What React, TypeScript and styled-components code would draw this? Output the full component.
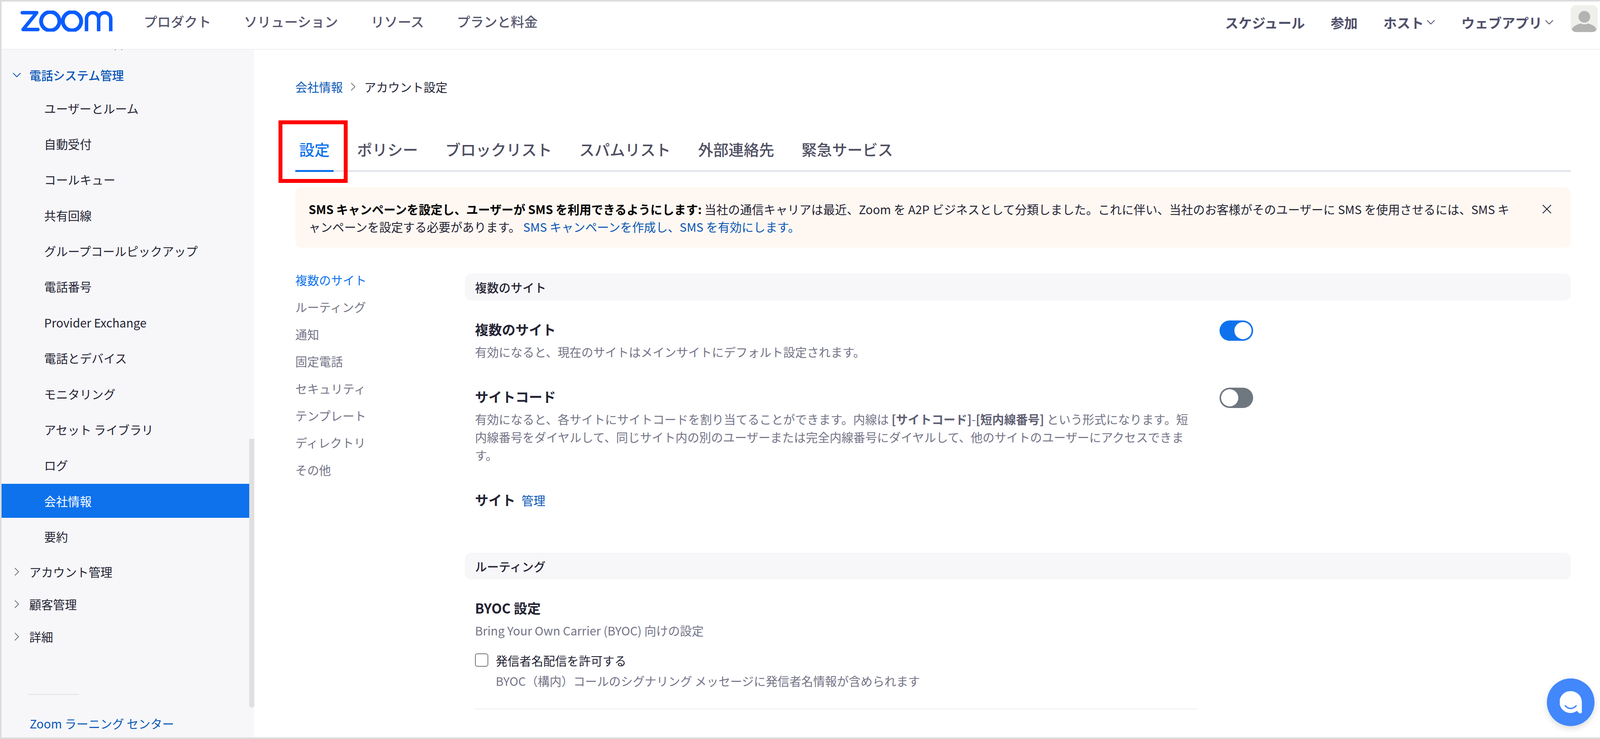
import styled, { createGlobalStyle } from "styled-components";
import { ChevronDown, ChevronRight, X } from "lucide-react";

const GlobalStyle = createGlobalStyle`
  html, body {
    margin: 0;
    padding: 0;
    background: #fff;
  }
  body {
    font-family: "Noto Sans CJK JP", "Noto Sans", sans-serif;
    color: #232333;
  }
  * {
    box-sizing: border-box;
  }
`;

const subItems = [
  "ユーザーとルーム",
  "自動受付",
  "コールキュー",
  "共有回線",
  "グループコールピックアップ",
  "電話番号",
  "Provider Exchange",
  "電話とデバイス",
  "モニタリング",
  "アセット ライブラリ",
  "ログ",
  "会社情報",
  "要約",
];

const tabs = ["設定", "ポリシー", "ブロックリスト", "スパムリスト", "外部連絡先", "緊急サービス"];
const sections = ["複数のサイト", "ルーティング", "通知", "固定電話", "セキュリティ", "テンプレート", "ディレクトリ", "その他"];

const ZoomLogo = () => (
  <svg width="240" height="54" viewBox="0 0 240 54" fill="none" stroke="#0b5cff">
    <path d="M7 5.5H44L9 48.5H47" strokeWidth="9" strokeLinejoin="round" strokeLinecap="round" />
    <circle cx="78.7" cy="27.3" r="23.5" strokeWidth="10" />
    <circle cx="134.3" cy="27.3" r="23.5" strokeWidth="10" />
    <path
      d="M171.5 53V21A15.5 15.5 0 0 1 202.5 21V53M202.5 21A15.5 15.5 0 0 1 233.5 21V53"
      strokeWidth="9"
    />
  </svg>
);

const AvatarIcon = () => (
  <svg width="69" height="69" viewBox="0 0 69 69" fill="#b3b3b3">
    <circle cx="35" cy="30" r="15" />
    <path d="M3 62C5 54 18 49 26 47C30 50 40 50 44 47C52 49 64 54 66 62C66 66 62 69 56 69H13C8 69 3 66 3 62Z" />
  </svg>
);

const ChatIcon = () => (
  <svg width="57" height="58" viewBox="0 0 57 58" fill="none">
    <path
      d="M28.5 .5A28 28 0 0 1 56.5 28.5V54Q56.5 58 52 57.5Q49 57 44 51A28 28 0 1 1 28.5 .5Z"
      fill="#fff"
    />
    <path d="M14 38Q28 52 42 38" stroke="#4287fb" strokeWidth="3.5" strokeLinecap="round" />
  </svg>
);

const App = () => {
  return (
    <Frame>
      <GlobalStyle />
      <Header>
        <LeftGroup>
          <ZoomLogo />
          <MainNav>
            <span>プロダクト</span>
            <span>ソリューション</span>
            <span>リソース</span>
            <span>プランと料金</span>
          </MainNav>
        </LeftGroup>
        <RightGroup>
          <RightNav>
            <span>スケジュール</span>
            <span>参加</span>
            <NavDrop>
              ホスト
              <ChevronDown size={36} strokeWidth={1.4} />
            </NavDrop>
            <NavDrop>
              ウェブアプリ
              <ChevronDown size={36} strokeWidth={1.4} />
            </NavDrop>
          </RightNav>
          <Avatar>
            <AvatarIcon />
          </Avatar>
        </RightGroup>
      </Header>

      <Body>
        <Sidebar>
          <PeekRow>ワークスペース管理</PeekRow>
          <TopRow $open>
            <ChevronDown size={36} strokeWidth={1.4} />
            電話システム管理
          </TopRow>
          <SubList>
            {subItems.map((item) => (
              <SubItem key={item} $active={item === "会社情報"}>
                {item}
              </SubItem>
            ))}
          </SubList>
          {["アカウント管理", "顧客管理", "詳細"].map((item) => (
            <TopRow key={item}>
              <ChevronRight size={36} strokeWidth={1.4} />
              {item}
            </TopRow>
          ))}
          <SideFooter>
            <FooterLine />
            <FooterLink>Zoom ラーニング センター</FooterLink>
          </SideFooter>
          <ScrollThumb />
        </Sidebar>

        <Main>
          <Breadcrumb>
            <a>会社情報</a>
            <ChevronRight size={36} strokeWidth={1.4} />
            <span>アカウント設定</span>
          </Breadcrumb>

          <TabBar>
            {tabs.map((tab, i) => (
              <Tab key={tab} $active={i === 0}>
                {tab}
                {i === 0 && <RedMark />}
              </Tab>
            ))}
          </TabBar>

          <Banner>
            <BannerText>
              <strong>SMS キャンペーンを設定し、ユーザーが SMS を利用できるようにします:</strong>{" "}
              当社の通信キャリアは最近、Zoom を A2P ビジネスとして分類しました。これに伴い、当社のお客様がそのユーザーに SMS を使用させるには、SMS キ
              <br />
              ャンペーンを設定する必要があります。 <a>SMS キャンペーンを作成し、SMS を有効にします。</a>
            </BannerText>
            <CloseBtn>
              <X size={40} strokeWidth={1.3} />
            </CloseBtn>
          </Banner>

          <Columns>
            <SectionNav>
              {sections.map((s, i) => (
                <SectionLink key={s} $active={i === 0}>
                  {s}
                </SectionLink>
              ))}
            </SectionNav>

            <Content>
              <SectionHead>複数のサイト</SectionHead>
              <SettingRow>
                <SettingText>
                  <SettingTitle>複数のサイト</SettingTitle>
                  <SettingDesc>有効になると、現在のサイトはメインサイトにデフォルト設定されます。</SettingDesc>
                </SettingText>
                <Toggle $on>
                  <Knob />
                </Toggle>
              </SettingRow>
              <SettingRow>
                <SettingText>
                  <SettingTitle>サイトコード</SettingTitle>
                  <SettingDesc>
                    有効になると、各サイトにサイトコードを割り当てることができます。内線は <b>[サイトコード]</b>-<b>[短内線番号]</b> という形式になります。短
                    <br />
                    内線番号をダイヤルして、同じサイト内の別のユーザーまたは完全内線番号にダイヤルして、他のサイトのユーザーにアクセスできま
                    <br />
                    す。
                  </SettingDesc>
                </SettingText>
                <Toggle>
                  <Knob />
                </Toggle>
              </SettingRow>
              <SettingRow>
                <SettingTitle>
                  サイト <ManageLink>管理</ManageLink>
                </SettingTitle>
              </SettingRow>

              <SectionHead $second>ルーティング</SectionHead>
              <SettingRow>
                <SettingText>
                  <SettingTitle>BYOC 設定</SettingTitle>
                  <SettingDesc>Bring Your Own Carrier (BYOC) 向けの設定</SettingDesc>
                  <CheckRow>
                    <CheckBox />
                    <div>
                      <CheckLabel>発信者名配信を許可する</CheckLabel>
                      <CheckDesc>BYOC（構内）コールのシグナリング メッセージに発信者名情報が含められます</CheckDesc>
                    </div>
                  </CheckRow>
                  <Divider />
                </SettingText>
              </SettingRow>
            </Content>
          </Columns>
        </Main>
      </Body>

      <ChatButton>
        <ChatIcon />
      </ChatButton>
    </Frame>
  );
};

export default App;

const Frame = styled.div`
  position: relative;
  width: 4116px;
  height: 1891px;
  border: 4px solid #dcdcdc;
  overflow: hidden;
  background: #fff;
  display: flex;
  flex-direction: column;
`;

const Header = styled.header`
  height: 123px;
  flex: none;
  display: flex;
  justify-content: space-between;
  align-items: flex-start;
  padding: 0 22px 0 46px;
  border-bottom: 2px solid #f0f0f3;
  background: #fff;
  position: relative;
  z-index: 2;
`;

const LeftGroup = styled.div`
  display: flex;
  align-items: center;
  margin-top: 23px;
  svg {
    display: block;
  }
`;

const MainNav = styled.nav`
  display: flex;
  gap: 84px;
  margin-left: 78px;
  font-size: 34.5px;
  line-height: 48px;
  color: #56566e;
  font-weight: 500;
`;

const RightGroup = styled.div`
  display: flex;
  align-items: flex-start;
`;

const RightNav = styled.nav`
  display: flex;
  gap: 66px;
  margin-top: 31px;
  font-size: 34.5px;
  line-height: 44px;
  font-weight: 700;
  color: #4f4f6a;
`;

const NavDrop = styled.span`
  display: flex;
  align-items: center;
  svg {
    margin: 0 -6px 0 0;
  }
`;

const Avatar = styled.div`
  width: 69px;
  height: 69px;
  margin: 9px 0 0 43px;
  border-radius: 14px;
  background: #f0f0ea;
  overflow: hidden;
  svg {
    display: block;
  }
`;

const Body = styled.div`
  flex: 1;
  display: flex;
  min-height: 0;
`;

const Sidebar = styled.aside`
  position: relative;
  width: 647px;
  flex: none;
  padding-right: 13px;
  display: flex;
  flex-direction: column;
  overflow: hidden;
  background: #f7f7fa;
  font-size: 30.4px;
  line-height: 44px;
`;

const PeekRow = styled.div`
  flex: none;
  height: 76px;
  margin-top: -53px;
  padding-left: 75px;
  display: flex;
  align-items: center;
`;

const TopRow = styled.div<{ $open?: boolean }>`
  flex: none;
  height: 83px;
  padding-left: 21px;
  display: flex;
  align-items: center;
  gap: 14px;
  color: ${(p) => (p.$open ? "#0956b5" : "#232333")};
  font-weight: ${(p) => (p.$open ? 500 : 400)};
  svg {
    color: ${(p) => (p.$open ? "#0956b5" : "#6e7680")};
  }
`;

const SubList = styled.div`
  display: flex;
  flex-direction: column;
  gap: 4.4px;
  margin-bottom: 5px;
`;

const SubItem = styled.div<{ $active?: boolean }>`
  height: 87px;
  padding-left: 109px;
  display: flex;
  align-items: center;
  color: ${(p) => (p.$active ? "#fff" : "#232333")};
  background: ${(p) => (p.$active ? "#0e72ed" : "transparent")};
`;

const SideFooter = styled.div`
  margin-top: auto;
  padding: 0 0 14px 68px;
`;

const FooterLine = styled.div`
  width: 130px;
  height: 2px;
  background: #dfe0e6;
`;

const FooterLink = styled.a`
  display: block;
  margin: 51px 0 0 4px;
  color: #0956b5;
`;

const ScrollThumb = styled.div`
  position: absolute;
  top: 996px;
  right: 0;
  width: 13px;
  height: 688px;
  border-radius: 0 0 7px 7px;
  background: #e0e0e0;
`;

const Main = styled.main`
  flex: 1;
  min-width: 0;
  padding: 73px 91px 0 105px;
  overflow: hidden;
  font-size: 30.4px;
  line-height: 44px;
`;

const Breadcrumb = styled.div`
  display: flex;
  align-items: center;
  color: #232333;
  a {
    color: #0956b5;
  }
  svg {
    margin: 0 11px 0 8px;
    color: #6e7680;
  }
`;

const TabBar = styled.div`
  display: flex;
  gap: 50px;
  margin-top: 106px;
  padding-top: 1px;
  border-bottom: 5px solid #e4e6ee;
`;

const Tab = styled.div<{ $active?: boolean }>`
  position: relative;
  padding: 0 10px 24px;
  margin-bottom: -5px;
  font-size: 39px;
  line-height: 60px;
  font-weight: 500;
  color: ${(p) => (p.$active ? "#0e72ed" : "#4f4f62")};
  border-bottom: 5px solid ${(p) => (p.$active ? "#0e72ed" : "transparent")};
`;

const RedMark = styled.span`
  position: absolute;
  left: -43px;
  top: -43px;
  width: 177px;
  height: 160px;
  border: 10px solid #ff0000;
`;

const Banner = styled.div`
  margin-top: 39px;
  height: 155px;
  padding: 34px 41px 0 34px;
  display: flex;
  justify-content: space-between;
  align-items: flex-start;
  border-radius: 16px;
  background: #fff8f2;
`;

const BannerText = styled.div`
  color: #232333;
  line-height: 45px;
  white-space: nowrap;
  strong {
    font-weight: 700;
    color: #000;
  }
  a {
    color: #0956b5;
  }
`;

const CloseBtn = styled.div`
  margin-top: 2px;
  height: 40px;
  color: #232333;
`;

const Columns = styled.div`
  display: flex;
  margin-top: 60px;
`;

const SectionNav = styled.nav`
  width: 434px;
  flex: none;
  display: flex;
  flex-direction: column;
  gap: 25.4px;
`;

const SectionLink = styled.a<{ $active?: boolean }>`
  color: ${(p) => (p.$active ? "#0e72ed" : "#747487")};
`;

const Content = styled.div`
  flex: 1;
  min-width: 0;
  padding-top: 6px;
`;

const SectionHead = styled.div<{ $second?: boolean }>`
  height: 69px;
  margin: ${(p) => (p.$second ? "109px 0 47px" : "0 0 48px")};
  padding: 0 26px;
  display: flex;
  align-items: center;
  border-radius: 16px;
  background: #f7f7f9;
  font-weight: 500;
  color: #232333;
`;

const SettingRow = styled.div`
  display: flex;
  align-items: flex-start;
  padding-left: 26px;
  margin-bottom: 66px;
  &:last-child {
    margin-bottom: 0;
  }
`;

const SettingText = styled.div`
  width: 1849px;
  flex: none;
`;

const SettingTitle = styled.div`
  font-size: 34.5px;
  line-height: 50px;
  font-weight: 700;
  color: #232333;
`;

const SettingDesc = styled.div`
  margin-top: 10px;
  line-height: 46px;
  color: #747487;
  white-space: nowrap;
  b {
    font-weight: 700;
    color: #5f5f73;
  }
`;

const ManageLink = styled.a`
  margin-left: 8px;
  font-size: 30.4px;
  font-weight: 400;
  color: #0956b5;
`;

const Toggle = styled.div<{ $on?: boolean }>`
  width: 86px;
  height: 52px;
  flex: none;
  margin: 3px 0 0 57px;
  padding: 0 4px;
  display: flex;
  align-items: center;
  justify-content: ${(p) => (p.$on ? "flex-end" : "flex-start")};
  border-radius: 26px;
  background: ${(p) => (p.$on ? "#0e72ed" : "#6e7680")};
`;

const Knob = styled.span`
  width: 44px;
  height: 44px;
  border-radius: 50%;
  background: #fff;
`;

const CheckRow = styled.div`
  display: flex;
  align-items: flex-start;
  gap: 19px;
  margin-top: 32px;
`;

const CheckBox = styled.span`
  width: 34px;
  height: 34px;
  flex: none;
  margin-top: 4px;
  border: 2px solid #6e7680;
  border-radius: 6px;
  background: #fff;
`;

const CheckLabel = styled.div`
  color: #232333;
`;

const CheckDesc = styled.div`
  margin-top: 7px;
  line-height: 46px;
  color: #747487;
`;

const Divider = styled.div`
  height: 2px;
  margin-top: 48px;
  background: #eeeef2;
`;

const ChatButton = styled.div`
  position: absolute;
  right: 30px;
  bottom: 29px;
  width: 122px;
  height: 122px;
  display: flex;
  align-items: center;
  justify-content: center;
  border-radius: 50%;
  background: #4287fb;
  box-shadow: 0 6px 16px rgba(0, 0, 0, 0.14);
  z-index: 3;
`;
